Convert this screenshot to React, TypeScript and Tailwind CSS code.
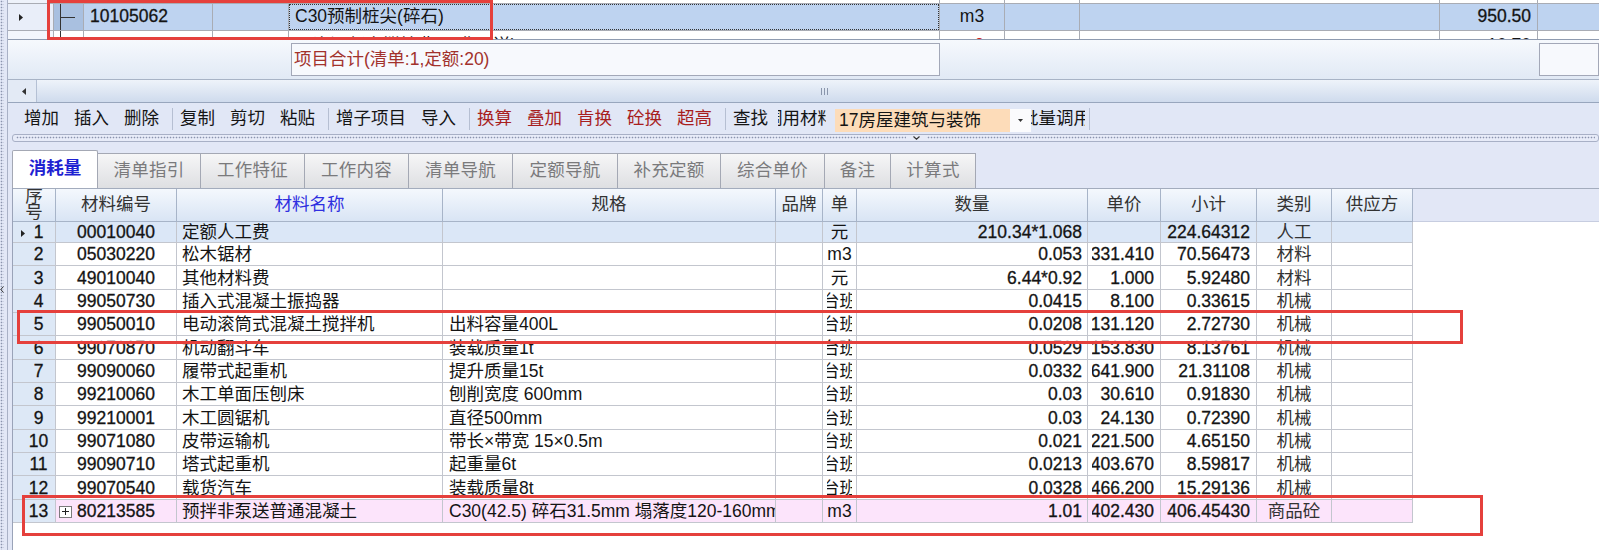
import React from "react";

type Row = {
  seq: string;
  code: string;
  name: string;
  spec: string;
  unit: string;
  qty: string;
  price: string;
  total: string;
  cat: string;
};

const rows: Row[] = [
  { seq: "1", code: "00010040", name: "定额人工费", spec: "", unit: "元", qty: "210.34*1.068", price: "", total: "224.64312", cat: "人工" },
  { seq: "2", code: "05030220", name: "松木锯材", spec: "", unit: "m3", qty: "0.053", price: "331.410", total: "70.56473", cat: "材料" },
  { seq: "3", code: "49010040", name: "其他材料费", spec: "", unit: "元", qty: "6.44*0.92", price: "1.000", total: "5.92480", cat: "材料" },
  { seq: "4", code: "99050730", name: "插入式混凝土振捣器", spec: "", unit: "台班", qty: "0.0415", price: "8.100", total: "0.33615", cat: "机械" },
  { seq: "5", code: "99050010", name: "电动滚筒式混凝土搅拌机", spec: "出料容量400L", unit: "台班", qty: "0.0208", price: "131.120", total: "2.72730", cat: "机械" },
  { seq: "6", code: "99070870", name: "机动翻斗车", spec: "装载质量1t", unit: "台班", qty: "0.0529", price: "153.830", total: "8.13761", cat: "机械" },
  { seq: "7", code: "99090060", name: "履带式起重机", spec: "提升质量15t", unit: "台班", qty: "0.0332", price: "641.900", total: "21.31108", cat: "机械" },
  { seq: "8", code: "99210060", name: "木工单面压刨床", spec: "刨削宽度 600mm", unit: "台班", qty: "0.03", price: "30.610", total: "0.91830", cat: "机械" },
  { seq: "9", code: "99210001", name: "木工圆锯机", spec: "直径500mm", unit: "台班", qty: "0.03", price: "24.130", total: "0.72390", cat: "机械" },
  { seq: "10", code: "99071080", name: "皮带运输机", spec: "带长×带宽 15×0.5m", unit: "台班", qty: "0.021", price: "221.500", total: "4.65150", cat: "机械" },
  { seq: "11", code: "99090710", name: "塔式起重机", spec: "起重量6t", unit: "台班", qty: "0.0213", price: "403.670", total: "8.59817", cat: "机械" },
  { seq: "12", code: "99070540", name: "载货汽车", spec: "装载质量8t", unit: "台班", qty: "0.0328", price: "466.200", total: "15.29136", cat: "机械" },
  { seq: "13", code: "80213585", name: "预拌非泵送普通混凝土", spec: "C30(42.5) 碎石31.5mm 塌落度120-160mm", unit: "m3", qty: "1.01", price: "402.430", total: "406.45430", cat: "商品砼" },
];

const dots =
  "bg-[radial-gradient(circle,#8a93ad_0.7px,transparent_1.1px)] bg-[length:3px_3px]";

const num = "[-webkit-text-stroke:0.3px_#141414]";

function Tri({ dir = "right" }: { dir?: "right" | "left" }) {
  return (
    <svg width="4" height="7" viewBox="0 0 4 7" className="block">
      {dir === "right" ? <path d="M0 0L4 3.5L0 7Z" fill="#222" /> : <path d="M4 0L0 3.5L4 7Z" fill="#333" />}
    </svg>
  );
}

function TopGrid() {
  const line = "border-r border-[#a9acb4] shrink-0 h-full";
  return (
    <div className="h-[40px] shrink-0 flex flex-col bg-white overflow-hidden border-b border-[#8f9bb0]">
      <div className="h-[4px] shrink-0 flex border-b border-[#a9acb4]">
        <div className={`w-[46px] bg-[#eef2fa] ${line}`} />
        <div className={`w-[30px] ${line} relative`}>
          <div className="ml-[6px] w-px h-full bg-[#333]" />
        </div>
        <div className={`w-[129px] ${line}`} />
        <div className={`w-[76px] ${line}`} />
        <div className={`w-[651px] ${line}`} />
        <div className={`w-[65px] ${line}`} />
        <div className={`w-[75px] ${line}`} />
        <div className={`w-[360px] ${line}`} />
        <div className={`w-[98px] ${line}`} />
        <div className="flex-1" />
      </div>
      <div className="h-[27px] shrink-0 flex bg-[#bed3f0] border-b border-[#a9acb4]">
        <div className={`w-[46px] bg-[#e9eef9] ${line} flex items-center pl-[11px]`}>
          <Tri />
        </div>
        <div className={`w-[30px] bg-[#a9c0e0] ${line} flex`}>
          <div className="ml-[6px] w-px h-full bg-[#333]" />
          <div className="w-[14px] h-px bg-[#333] mt-[13px]" />
        </div>
        <div className={`w-[129px] ${line} flex items-center pl-[6px] ${num}`}>10105062</div>
        <div className={`w-[76px] ${line}`} />
        <div className={`w-[651px] ${line} border-[#a9acb4]`}>
          <div className="h-full border border-dotted border-[#333] flex items-center pl-[5px]">C30预制桩尖(碎石)</div>
        </div>
        <div className={`w-[65px] ${line} flex items-center justify-center`}>m3</div>
        <div className={`w-[75px] ${line}`} />
        <div className={`w-[360px] ${line}`} />
        <div className={`w-[98px] ${line} flex items-center justify-end pr-[6px] ${num}`}>950.50</div>
        <div className="flex-1" />
      </div>
      <div className="h-[9px] shrink-0 overflow-hidden">
        <div className="h-[24px] flex">
          <div className={`w-[46px] bg-[#f3f6fc] ${line}`} />
          <div className={`w-[30px] ${line}`}>
            <div className="ml-[6px] w-px h-full bg-[#333]" />
          </div>
          <div className={`w-[129px] ${line}`} />
          <div className={`w-[76px] ${line}`} />
          <div className={`w-[651px] ${line} flex items-center pl-[6px] pt-[6px]`}>现浇混凝土搅拌费用(非泵送)</div>
          <div className={`w-[65px] ${line} flex items-center justify-center pt-[6px] text-[#d02020]`}>m3</div>
          <div className={`w-[75px] ${line}`} />
          <div className={`w-[360px] ${line}`} />
          <div className={`w-[98px] ${line} flex items-center justify-end pr-[6px] pt-[6px]`}>10.70</div>
          <div className="flex-1" />
        </div>
      </div>
    </div>
  );
}

function Panel() {
  return (
    <div className="h-[39px] shrink-0 flex items-center bg-linear-to-b from-[#f6f9fd] to-[#e1e9f5]">
      <div className="w-[283px] shrink-0" />
      <div className="w-[649px] h-[33px] shrink-0 border border-[#a3a8b8] bg-[#f7f9fd] flex items-center pl-[2px] pt-[1px] text-[#a2322c]">
        项目合计(清单:1,定额:20)
      </div>
      <div className="w-[599px] shrink-0" />
      <div className="flex-1 h-[33px] border border-[#a3a8b8] bg-[#f7f9fd]" />
    </div>
  );
}

function Scrollbar() {
  return (
    <div className="h-[24px] shrink-0 flex border-t border-[#a8b3c6] border-b border-b-[#98a6bd] bg-[#e3eaf5]">
      <div className="w-[28px] shrink-0 flex items-center justify-center pl-[4px]">
        <Tri dir="left" />
      </div>
      <div className="flex-1 border-l border-[#b4c0d4] bg-linear-to-b from-[#eef3fa] to-[#cfdbed] flex items-center">
        <div className="w-[784px] shrink-0" />
        <div className="flex gap-[2px]">
          <div className="w-px h-[7px] bg-[#8a96ac]" />
          <div className="w-px h-[7px] bg-[#8a96ac]" />
          <div className="w-px h-[7px] bg-[#8a96ac]" />
        </div>
      </div>
    </div>
  );
}

function Btn({ children, red }: { children: React.ReactNode; red?: boolean }) {
  return (
    <div className={`px-[7.5px] shrink-0 whitespace-nowrap ${red ? "text-[#a81e1e]" : "text-[#151515]"}`}>{children}</div>
  );
}

function Sep() {
  return <div className="w-px h-[22px] bg-[#b6bfd2] ml-[5px] shrink-0" />;
}

function Toolbar() {
  return (
    <div className="h-[29px] shrink-0 flex items-center pl-[8.5px] pt-[2px] bg-[#e1e7f6] overflow-hidden">
      <Btn>增加</Btn>
      <Btn>插入</Btn>
      <Btn>删除</Btn>
      <Sep />
      <Btn>复制</Btn>
      <Btn>剪切</Btn>
      <Btn>粘贴</Btn>
      <Sep />
      <Btn>增子项目</Btn>
      <Btn>导入</Btn>
      <Sep />
      <Btn red>换算</Btn>
      <Btn red>叠加</Btn>
      <Btn red>肯换</Btn>
      <Btn red>砼换</Btn>
      <Btn red>超高</Btn>
      <Sep />
      <Btn>查找</Btn>
      <div className="ml-[2.5px] w-[48px] shrink-0 overflow-hidden whitespace-nowrap">
        <span className="inline-block ml-[-13px]">调用材料</span>
      </div>
      <div className="ml-[9px] w-[175px] h-[23px] shrink-0 bg-[#fddcb9] flex items-center pl-[4px] whitespace-nowrap self-end">
        17房屋建筑与装饰
      </div>
      <div className="w-[21px] h-[23px] shrink-0 bg-[#fbfbfd] flex items-center justify-center self-end">
        <svg width="5" height="3" viewBox="0 0 5 3">
          <path d="M0 0H5L2.5 3Z" fill="#333" />
        </svg>
      </div>
      <div className="w-[54px] shrink-0 overflow-hidden whitespace-nowrap">
        <span className="inline-block ml-[-10px]">批量调用</span>
      </div>
      <div className="w-px h-[22px] bg-[#b6bfd2] ml-[4px] shrink-0" />
    </div>
  );
}

function Splitter() {
  return (
    <div className="h-[10px] shrink-0 pl-[4px] pt-[1.5px]">
      <div className="h-[8px] border border-[#a8b0c6] rounded-[3px] flex items-center px-[3px] bg-[#e7ebf8]">
        <div className={`w-[890px] h-[3px] shrink-0 ${dots}`} />
        <div className="w-[21px] shrink-0 flex justify-center">
          <svg width="7" height="4" viewBox="0 0 7 4">
            <path d="M0.5 0.5L3.5 3.2L6.5 0.5" stroke="#333" strokeWidth="1.2" fill="none" />
          </svg>
        </div>
        <div className={`flex-1 h-[3px] ${dots}`} />
      </div>
    </div>
  );
}

const tabs: { label: string; w: string }[] = [
  { label: "清单指引", w: "w-[103px]" },
  { label: "工作特征", w: "w-[104px]" },
  { label: "工作内容", w: "w-[104px]" },
  { label: "清单导航", w: "w-[104px]" },
  { label: "定额导航", w: "w-[105px]" },
  { label: "补充定额", w: "w-[103px]" },
  { label: "综合单价", w: "w-[104px]" },
  { label: "备注", w: "w-[66px]" },
  { label: "计算式", w: "w-[85px]" },
];

function Tabs() {
  return (
    <div className="h-[46px] shrink-0 pl-[4px] flex items-end">
      <div className="w-[86px] h-[38px] shrink-0 bg-white border border-b-0 border-[#a4a8b4] rounded-t-[2px] flex items-center justify-center pb-[1px] font-bold text-[#1e22d2]">
        消耗量
      </div>
      {tabs.map((t) => (
        <div
          key={t.label}
          className={`${t.w} h-[35px] shrink-0 border border-l-0 border-b-0 border-[#a4a8b4] bg-linear-to-b from-[#f6f6f7] to-[#dedfe2] flex items-center justify-center text-[#7a7a7c] tracking-[0.3px]`}
        >
          {t.label}
        </div>
      ))}
    </div>
  );
}

const hc = "shrink-0 h-full border-r border-b border-[#a7b4c8] flex items-center justify-center overflow-hidden whitespace-nowrap";

function Header() {
  return (
    <div className="h-[34px] shrink-0 flex border-t border-[#a3acbd]">
      <div className="flex shrink-0 bg-linear-to-b from-[#f4f8fd] to-[#d8e4f4] text-[#333]">
        <div className={`w-[43px] ${hc} !items-end`}>
          <div className="flex flex-col items-center leading-[16px] pb-[1px]">
            <span>序</span>
            <span>号</span>
          </div>
        </div>
        <div className={`w-[121px] ${hc}`}>材料编号</div>
        <div className={`w-[266px] ${hc} text-[#2f2fe0]`}>材料名称</div>
        <div className={`w-[333px] ${hc}`}>规格</div>
        <div className={`w-[47px] ${hc}`}>品牌</div>
        <div className={`w-[34px] ${hc}`}>单</div>
        <div className={`w-[231px] ${hc}`}>数量</div>
        <div className={`w-[73px] ${hc}`}>单价</div>
        <div className={`w-[96px] ${hc}`}>小计</div>
        <div className={`w-[75px] ${hc}`}>类别</div>
        <div className={`w-[81px] ${hc}`}>供应方</div>
      </div>
      <div className="flex-1 bg-[#e2e7f6] border-b border-[#c7cde0]" />
    </div>
  );
}

const dc = "shrink-0 h-full border-r border-b border-[#c3c6ce] flex items-center overflow-hidden whitespace-nowrap pt-[2px]";

function DataRow({ r, idx }: { r: Row; idx: number }) {
  const first = idx === 0;
  const last = idx === rows.length - 1;
  const h = first ? "h-[21px]" : "h-[23.33px]";
  const bg = first ? "bg-[#dbe7f7]" : last ? "bg-[#fce4fb]" : "bg-white";
  return (
    <div className={`${h} shrink-0 flex`}>
      <div className={`w-[43px] ${dc} bg-[#dde8f6] relative justify-center pl-[9px] ${num}`}>
        {first && (
          <div className="absolute left-[8px] top-[8px]">
            <Tri />
          </div>
        )}
        {r.seq}
      </div>
      <div className={`flex shrink-0 ${bg}`}>
        <div className={`w-[121px] ${dc} justify-center ${num}`}>
          {last ? (
            <>
              <div className="w-[16px] shrink-0 flex justify-end">
                <div className="w-[13px] h-[12px] border border-[#7c7c7c] bg-white flex items-center justify-center">
                  <svg width="7" height="7" viewBox="0 0 7 7">
                    <path d="M0 3.5H7M3.5 0V7" stroke="#222" strokeWidth="1" />
                  </svg>
                </div>
              </div>
              <div className="flex-1 text-center">{r.code}</div>
              <div className="w-[16px] shrink-0" />
            </>
          ) : (
            r.code
          )}
        </div>
        <div className={`w-[266px] ${dc} pl-[5px]`}>{r.name}</div>
        <div className={`w-[333px] ${dc} pl-[6px]`}>{r.spec}</div>
        <div className={`w-[47px] ${dc}`} />
        <div className={`w-[34px] ${dc} px-[4px]`}>
          <div className="w-full h-full overflow-hidden flex items-center justify-center">
            <span className="whitespace-nowrap">{r.unit}</span>
          </div>
        </div>
        <div className={`w-[231px] ${dc} justify-end pr-[5px] ${num}`}>{r.qty}</div>
        <div className={`w-[73px] ${dc} pl-[4px] pr-[6px] ${num}`}>
          <div className="w-full overflow-hidden flex justify-end">
            <span className="whitespace-nowrap">{r.price}</span>
          </div>
        </div>
        <div className={`w-[96px] ${dc} justify-end pr-[6px] ${num}`}>{r.total}</div>
        <div className={`w-[75px] ${dc} justify-center text-[#333]`}>{r.cat}</div>
        <div className={`w-[81px] ${dc}`} />
      </div>
      <div className="flex-1" />
    </div>
  );
}

function Grid() {
  return (
    <div className="flex-1 ml-[4px] flex flex-col bg-white border-l border-[#9aa3b8] min-h-0">
      <Header />
      {rows.map((r, i) => (
        <DataRow key={r.seq} r={r} idx={i} />
      ))}
    </div>
  );
}

export default function App() {
  return (
    <div className="relative w-[1599px] h-[550px] overflow-hidden bg-[#e2e7f6] text-[17.5px] leading-none text-[#141414] font-['Liberation_Sans','Noto_Sans_CJK_SC',sans-serif] flex">
      <div className={`w-[4px] shrink-0 h-full ${dots} flex flex-col`}>
        <div className="h-[286px]" />
        <svg width="4" height="7" viewBox="0 0 4 7">
          <path d="M3.5 0.5L0.8 3.5L3.5 6.5" stroke="#333" strokeWidth="1" fill="none" />
        </svg>
      </div>
      <div className="w-[3px] shrink-0" />
      <div className="flex-1 min-w-0 flex flex-col border-l border-[#a9b1c6]">
        <TopGrid />
        <Panel />
        <Scrollbar />
        <Toolbar />
        <Splitter />
        <Tabs />
        <Grid />
      </div>

      {/* annotation boxes drawn over the screenshot */}
      <div className="absolute left-[47px] top-0 w-[446px] h-[40px] border-[3px] border-[#e5403c] pointer-events-none" />
      <div className="absolute left-[17px] top-[310px] w-[1446px] h-[34px] border-[3px] border-[#e5403c] pointer-events-none" />
      <div className="absolute left-[22px] top-[495px] w-[1461px] h-[41px] border-[3px] border-[#e5403c] pointer-events-none" />
    </div>
  );
}
